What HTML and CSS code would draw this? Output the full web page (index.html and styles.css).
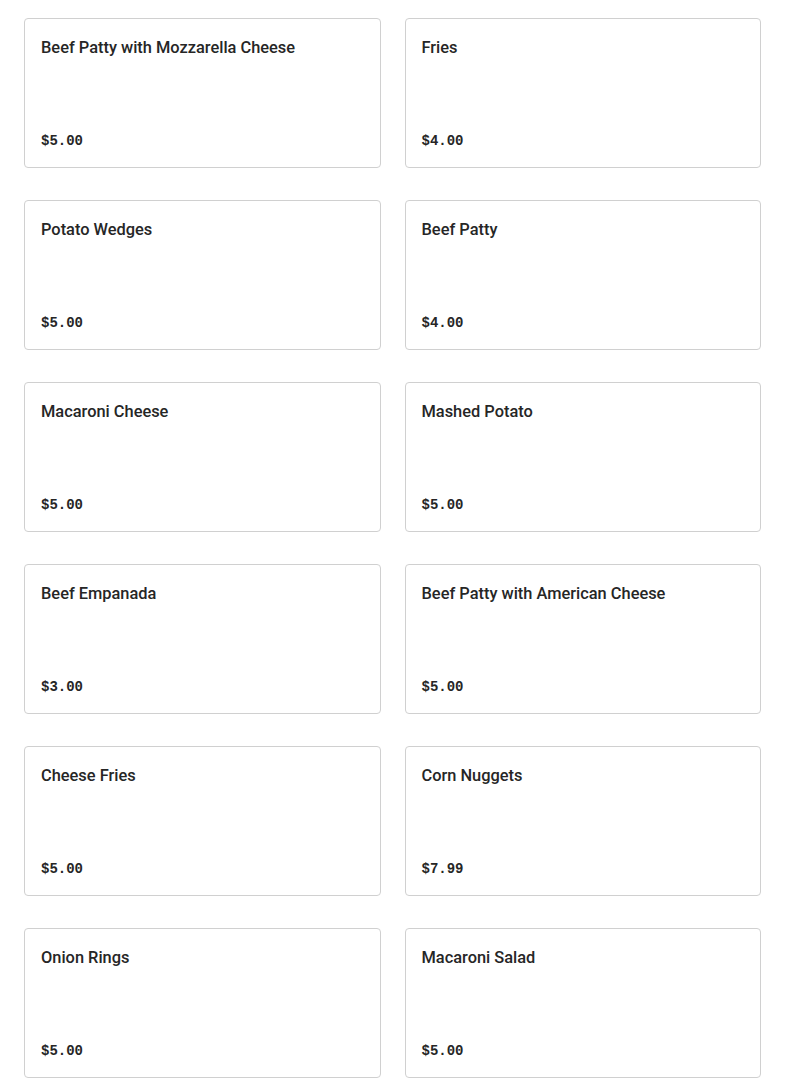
FILE: index.html
```html
<!DOCTYPE html>
<html>
<head>
<meta charset="utf-8">
<link rel="stylesheet" href="styles.css">
</head>
<body>
<div class="grid">
  <div class="card"><div class="name">Beef Patty with Mozzarella Cheese</div><div class="price">$5.00</div></div>
  <div class="card"><div class="name">Fries</div><div class="price">$4.00</div></div>
  <div class="card"><div class="name">Potato Wedges</div><div class="price">$5.00</div></div>
  <div class="card"><div class="name">Beef Patty</div><div class="price">$4.00</div></div>
  <div class="card"><div class="name">Macaroni Cheese</div><div class="price">$5.00</div></div>
  <div class="card"><div class="name">Mashed Potato</div><div class="price">$5.00</div></div>
  <div class="card"><div class="name">Beef Empanada</div><div class="price">$3.00</div></div>
  <div class="card"><div class="name">Beef Patty with American Cheese</div><div class="price">$5.00</div></div>
  <div class="card"><div class="name">Cheese Fries</div><div class="price">$5.00</div></div>
  <div class="card"><div class="name">Corn Nuggets</div><div class="price">$7.99</div></div>
  <div class="card"><div class="name">Onion Rings</div><div class="price">$5.00</div></div>
  <div class="card"><div class="name">Macaroni Salad</div><div class="price">$5.00</div></div>
</div>
</body>
</html>
```
FILE: styles.css
```css
html, body {
  margin: 0;
  padding: 0;
  background: #fff;
}
body {
  font-family: Roboto, "Liberation Sans", sans-serif;
  color: #222;
}
.grid {
  display: grid;
  grid-template-columns: 1fr 1fr;
  column-gap: 24px;
  row-gap: 32px;
  padding: 18px 24px;
}
.card {
  box-sizing: border-box;
  height: 150px;
  border: 1px solid #d0d0d0;
  border-radius: 4px;
  padding: 17px 16px 16px;
  display: flex;
  flex-direction: column;
  justify-content: space-between;
}
.name {
  font-size: 16.4px;
  font-weight: 500;
  line-height: 24px;
  color: #262626;
}
.price {
  font-family: "Liberation Mono", "DejaVu Sans Mono", monospace;
  font-weight: bold;
  font-size: 14px;
  line-height: 20px;
  color: #262626;
}
```
